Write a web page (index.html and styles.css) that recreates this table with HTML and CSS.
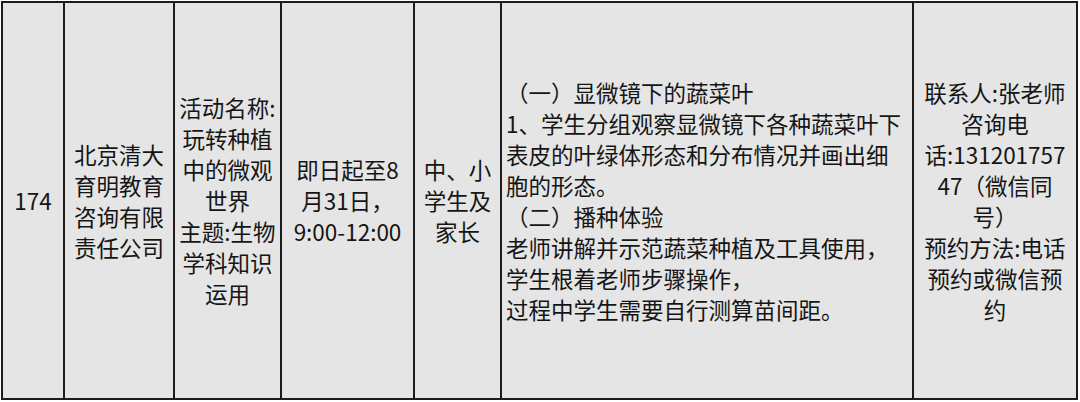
FILE: index.html
```html
<!DOCTYPE html>
<html lang="zh-CN">
<head>
<meta charset="utf-8">
<link rel="stylesheet" href="styles.css">
</head>
<body>
<div class="row">
  <div class="cell c-no">174</div>
  <div class="cell c-org">北京清大育明教育咨询有限责任公司</div>
  <div class="cell c-name">活动名称:玩转种植中的微观世界<br>主题:生物学科知识运用</div>
  <div class="cell c-time">即日起至8月31日，9:00-12:00</div>
  <div class="cell c-aud">中、小学生及家长</div>
  <div class="cell c-desc">（一）显微镜下的蔬菜叶<br>1、学生分组观察显微镜下各种蔬菜叶下<br>表皮的叶绿体形态和分布情况并画出细<br>胞的形态。<br>（二）播种体验<br>老师讲解并示范蔬菜种植及工具使用，<br>学生根着老师步骤操作，<br>过程中学生需要自行测算苗间距。</div>
  <div class="cell c-contact">联系人:张老师<br>咨询电话:13120175747（微信同号）<br>预约方法:电话预约或微信预约</div>
</div>
</body>
</html>
```
FILE: styles.css
```css
html, body {
  margin: 0;
  padding: 0;
  background: #ffffff;
}
body {
  padding: 1px;
  font-family: "Noto Sans CJK SC", "Noto Sans", sans-serif;
  font-size: 22.5px;
  line-height: 31px;
  color: #151515;
}
.row {
  display: grid;
  grid-template-columns: 60px 108px 105px 131px 85px 410px 162px;
  gap: 2px;
  padding: 2px;
  width: 1073px;
  height: 395px;
  background: #1c1c1c;
}
.cell {
  background: #e5e5e5;
  display: flex;
  flex-direction: column;
  justify-content: center;
  text-align: center;
  min-width: 0;
  overflow-wrap: break-word;
}
.c-time {
  padding: 0 5px;
}
.c-contact {
  padding: 0 5px;
}
.c-desc {
  text-align: left;
  padding-left: 4px;
  white-space: nowrap;
}
```
